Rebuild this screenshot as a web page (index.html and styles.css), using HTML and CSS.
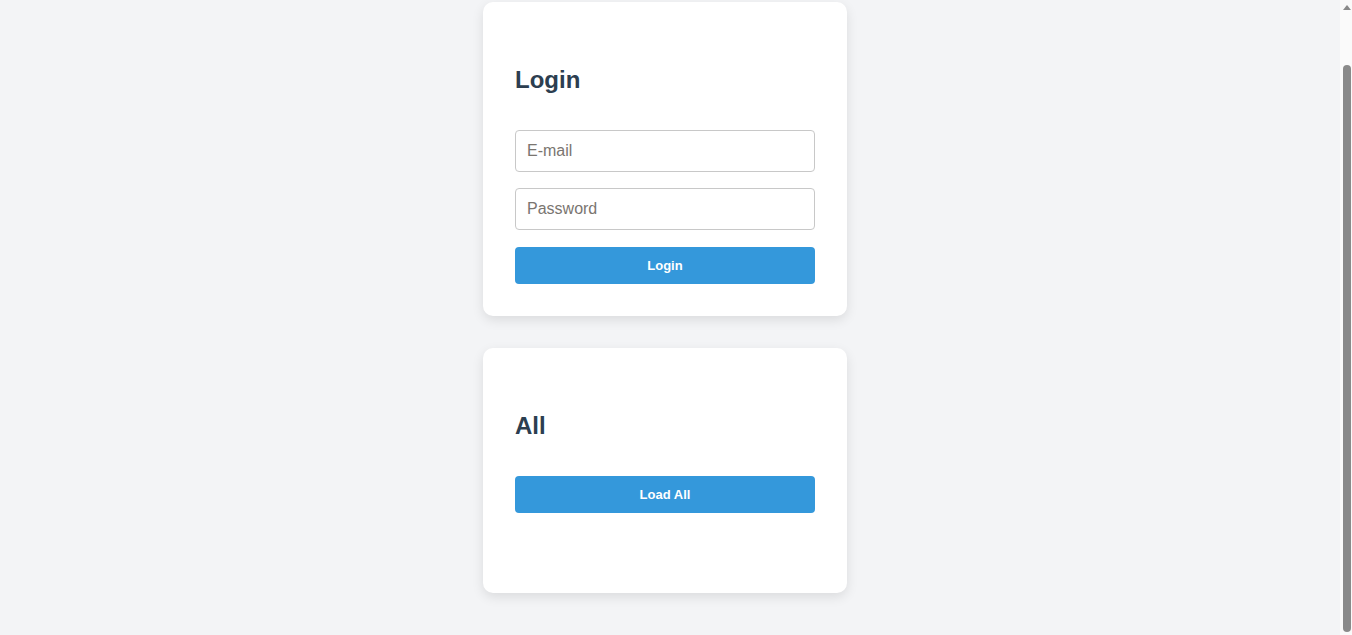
FILE: index.html
```html
<!DOCTYPE html>
<html lang="en">
<head>
<meta charset="utf-8">
<title>Login</title>
<link rel="stylesheet" href="styles.css">
</head>
<body>
<main class="page">
  <section class="card">
    <h2 class="card-title">Login</h2>
    <form class="form">
      <input class="field" type="email" placeholder="E-mail">
      <input class="field" type="password" placeholder="Password">
      <button class="btn btn-form" type="button">Login</button>
    </form>
  </section>
  <section class="card">
    <h2 class="card-title">All</h2>
    <button class="btn" type="button">Load All</button>
    <div class="results"></div>
  </section>
</main>
<div class="scrollbar" aria-hidden="true">
  <span class="scroll-arrow"></span>
  <span class="scroll-thumb"></span>
</div>
</body>
</html>
```

FILE: styles.css
```css
html, body {
  margin: 0;
  padding: 0;
}
body {
  background: #f3f4f6;
  font-family: "Liberation Sans", Arial, sans-serif;
  color: #2c3e50;
}
.page {
  display: flex;
  flex-direction: column;
  align-items: center;
  gap: 32px;
  padding: 2px 22px 42px 0;
}
.card {
  width: 300px;
  padding: 32px;
  background: #ffffff;
  border-radius: 10px;
  box-shadow: 0 4px 12px rgba(0, 0, 0, 0.1);
}
.card-title {
  margin: 32px 0 36px;
  font-size: 24px;
  line-height: 28px;
  font-weight: 700;
  color: #2c3e50;
}
.form {
  display: flex;
  flex-direction: column;
  gap: 16px;
}
.field {
  box-sizing: border-box;
  width: 100%;
  height: 42px;
  margin: 0;
  padding: 0 11px;
  border: 1px solid #c8c8c8;
  border-radius: 4px;
  font-family: "Liberation Sans", Arial, sans-serif;
  font-size: 16px;
  color: #333;
  background: #fff;
}
.field::placeholder {
  color: #7a7570;
}
.btn {
  display: block;
  width: 100%;
  height: 37px;
  margin: 0;
  padding: 0;
  border: none;
  border-radius: 4px;
  background: #3498db;
  color: #ffffff;
  font-family: "Liberation Sans", Arial, sans-serif;
  font-size: 13px;
  font-weight: 700;
  cursor: pointer;
}
.btn-form {
  margin-top: 1px;
}
.results {
  min-height: 48px;
}
.scrollbar {
  position: fixed;
  top: 0;
  right: 0;
  bottom: 0;
  width: 12px;
  background: #fafafa;
  display: flex;
  flex-direction: column;
  align-items: flex-start;
}
.scroll-arrow {
  margin: 5px 0 0 3px;
  width: 0;
  height: 0;
  border-left: 4px solid transparent;
  border-right: 4px solid transparent;
  border-bottom: 5px solid #8a8a8a;
}
.scroll-thumb {
  margin: 55px 0 0 3px;
  width: 8px;
  height: 567px;
  background: #8a8a8a;
  border-radius: 4px;
}
```
